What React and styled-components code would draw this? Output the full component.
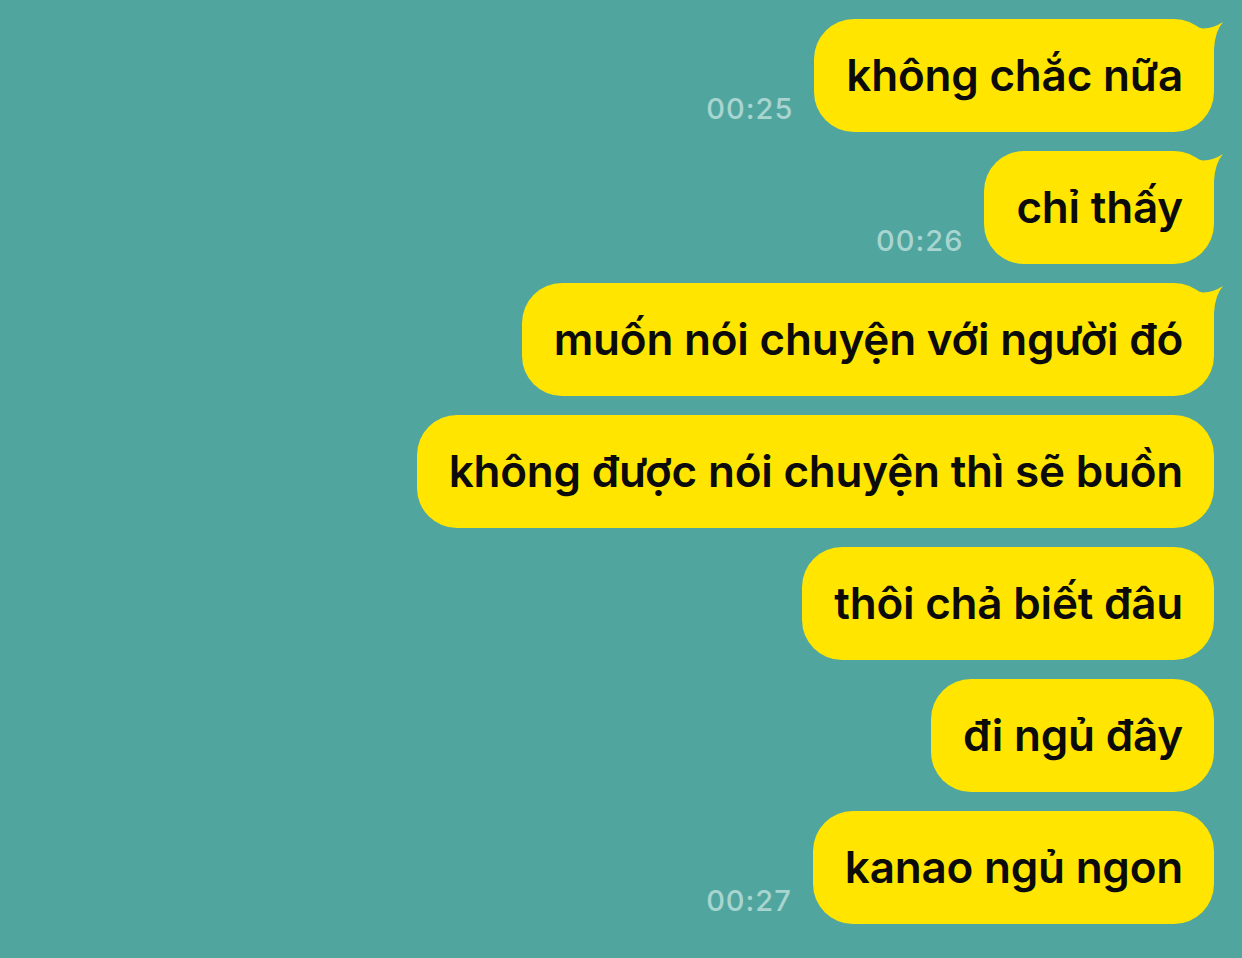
import React from "react";
import styled, { createGlobalStyle } from "styled-components";

const Global = createGlobalStyle`
  html, body { margin: 0; padding: 0; background: #50a59f; }
  body { width: 1242px; height: 958px; overflow: hidden; }
`;

const Screen = styled.div`
  width: 1242px;
  height: 958px;
  background: #50a59f;
  display: flex;
  flex-direction: column;
  align-items: flex-end;
  gap: 19px;
  padding: 19px 28px 0 0;
  box-sizing: border-box;
  font-family: Inter, "Noto Sans", sans-serif;
`;

const Row = styled.div`
  display: flex;
  align-items: flex-end;
  gap: 21px;
`;

const Time = styled.span`
  color: #a8d5d0;
  font-size: 29px;
  font-weight: 500;
  letter-spacing: 1px;
  padding-bottom: 6px;
`;

const Bubble = styled.div`
  position: relative;
  height: 113px;
  box-sizing: border-box;
  background: #ffe500;
  border-radius: 40px;
  padding: 0 31px 2px 32px;
  display: flex;
  align-items: center;
  color: #0b0b0b;
  font-size: 44px;
  font-weight: 600;
  letter-spacing: -0.2px;
  white-space: nowrap;
`;

const Label = styled.span`
  position: relative;
  z-index: 1;
`;

const Tail = styled.svg`
  position: absolute;
  top: 0;
  right: -10px;
  width: 50px;
  height: 60px;
  z-index: 0;
`;

const messages = [
  { text: "không chắc nữa", time: "00:25", tail: true },
  { text: "chỉ thấy", time: "00:26", tail: true },
  { text: "muốn nói chuyện với người đó", tail: true },
  { text: "không được nói chuyện thì sẽ buồn" },
  { text: "thôi chả biết đâu" },
  { text: "đi ngủ đây" },
  { text: "kanao ngủ ngon", time: "00:27" },
];

export default function App() {
  return (
    <>
      <Global />
      <Screen>
        {messages.map((m, i) => (
          <Row key={i}>
            {m.time && <Time>{m.time}</Time>}
            <Bubble>
              {m.tail && (
                <Tail viewBox="0 0 50 60">
                  <path
                    d="M18 5 Q25 9 29 9.5 Q40 9 49 3 Q41 12 40 30 L40 45 L18 45 Z"
                    fill="#ffe500"
                  />
                </Tail>
              )}
              <Label>{m.text}</Label>
            </Bubble>
          </Row>
        ))}
      </Screen>
    </>
  );
}
